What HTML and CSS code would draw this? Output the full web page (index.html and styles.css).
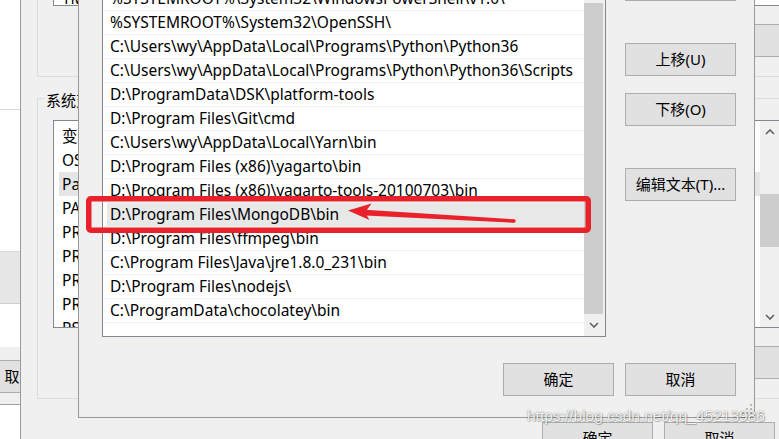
FILE: index.html
```html
<!DOCTYPE html>
<html lang="zh-CN">
<head>
<meta charset="utf-8">
<title>编辑环境变量</title>
<link rel="stylesheet" href="styles.css">
</head>
<body>
<div class="desktop">

  <div class="win bgwin">
    <div class="bg-a"></div>
    <div class="bg-b"></div>
    <div class="bg-c"></div>
    <div class="bg-d"></div>
    <div class="bg-e"><button class="btn bg-btn">取消</button></div>
    <div class="bg-f"></div>
  </div>

  <div class="win envwin">
    <div class="group group-user">
      <div class="listview lv-user">
        <div class="lv-rows">
          <div class="lv-row"><span class="lv-name" title="TMP">TMP</span></div>
        </div>
      </div>
      <div class="btn-row">
        <button class="btn" aria-label="新建(N)..."></button>
        <button class="btn" aria-label="编辑(E)..."></button>
        <button class="btn" aria-label="删除(D)"></button>
      </div>
    </div>

    <div class="group group-sys">
      <div class="group-title" title="系统变量(S)">系统变量</div>
      <div class="listview lv-sys">
        <div class="lv-rows">
          <div class="lv-row lv-head"><span class="lv-name" title="变量">变量</span></div>
          <div class="lv-row"><span class="lv-name" title="OS">OS</span></div>
          <div class="lv-row is-sel"><span class="lv-name" title="Path">Pa</span></div>
          <div class="lv-row"><span class="lv-name" title="PATHEXT">PA</span></div>
          <div class="lv-row"><span class="lv-name" title="PROCESSOR_ARCHITECTURE">PR</span></div>
          <div class="lv-row"><span class="lv-name" title="PROCESSOR_IDENTIFIER">PR</span></div>
          <div class="lv-row"><span class="lv-name" title="PROCESSOR_LEVEL">PR</span></div>
          <div class="lv-row"><span class="lv-name" title="PROCESSOR_REVISION">PR</span></div>
          <div class="lv-row"><span class="lv-name" title="PSModulePath">PS</span></div>
        </div>
        <div class="vscroll vscroll-sys">
          <div class="sb-arrow sb-up"><svg width="10" height="6" viewBox="0 0 10 6"><polyline points="1,5 5,1 9,5" fill="none" stroke="#606060" stroke-width="1.6"/></svg></div>
          <div class="sb-track"><div class="sb-thumb sys-thumb"></div></div>
          <div class="sb-arrow sb-down"><svg width="10" height="6" viewBox="0 0 10 6"><polyline points="1,1 5,5 9,1" fill="none" stroke="#606060" stroke-width="1.6"/></svg></div>
        </div>
      </div>
      <div class="btn-row">
        <button class="btn" aria-label="新建(W)..."></button>
        <button class="btn" aria-label="编辑(I)..."></button>
        <button class="btn" aria-label="删除(L)"></button>
      </div>
    </div>

    <div class="env-footer">
      <button class="btn">确定</button>
      <button class="btn">取消</button>
    </div>
  </div>

  <div class="win editdlg">
    <div class="edit-body">
      <div class="pathlist">
        <div class="path-rows">
          <div class="path-row">%SYSTEMROOT%\System32\Wbem</div>
          <div class="path-row">%SYSTEMROOT%\System32\WindowsPowerShell\v1.0\</div>
          <div class="path-row">%SYSTEMROOT%\System32\OpenSSH\</div>
          <div class="path-row">C:\Users\wy\AppData\Local\Programs\Python\Python36</div>
          <div class="path-row">C:\Users\wy\AppData\Local\Programs\Python\Python36\Scripts</div>
          <div class="path-row">D:\ProgramData\DSK\platform-tools</div>
          <div class="path-row">D:\Program Files\Git\cmd</div>
          <div class="path-row">C:\Users\wy\AppData\Local\Yarn\bin</div>
          <div class="path-row">D:\Program Files (x86)\yagarto\bin</div>
          <div class="path-row">D:\Program Files (x86)\yagarto-tools-20100703\bin</div>
          <div class="path-row is-sel">D:\Program Files\MongoDB\bin</div>
          <div class="path-row">D:\Program Files\ffmpeg\bin</div>
          <div class="path-row">C:\Program Files\Java\jre1.8.0_231\bin</div>
          <div class="path-row">D:\Program Files\nodejs\</div>
          <div class="path-row">C:\ProgramData\chocolatey\bin</div>
        </div>
        <div class="vscroll vscroll-path">
          <div class="sb-arrow sb-up-path"><svg width="10" height="6" viewBox="0 0 10 6"><polyline points="1,5 5,1 9,5" fill="none" stroke="#606060" stroke-width="1.6"/></svg></div>
          <div class="sb-track"><div class="sb-thumb path-thumb"></div></div>
          <div class="sb-arrow sb-down-path"><svg width="10" height="6" viewBox="0 0 10 6"><polyline points="1,1 5,5 9,1" fill="none" stroke="#606060" stroke-width="1.6"/></svg></div>
        </div>
      </div>
      <div class="side-btns">
        <button class="btn">删除(D)</button>
        <button class="btn gap-lg">上移(U)</button>
        <button class="btn gap-sm">下移(O)</button>
        <button class="btn gap-lg">编辑文本(T)...</button>
      </div>
    </div>
    <div class="edit-footer">
      <button class="btn">确定</button>
      <button class="btn">取消</button>
    </div>
    <svg class="grip" width="11" height="11" viewBox="0 0 11 11">
      <rect x="8" y="0" width="2" height="2" fill="#b9b9b9"/>
      <rect x="4" y="4" width="2" height="2" fill="#b9b9b9"/>
      <rect x="8" y="4" width="2" height="2" fill="#b9b9b9"/>
      <rect x="0" y="8" width="2" height="2" fill="#b9b9b9"/>
      <rect x="4" y="8" width="2" height="2" fill="#b9b9b9"/>
      <rect x="8" y="8" width="2" height="2" fill="#b9b9b9"/>
    </svg>
  </div>

  <svg class="annot" width="779" height="439" viewBox="0 0 779 439">
    <rect x="88.75" y="198.75" width="499.5" height="31.5" rx="2" fill="none" stroke="#e8212a" stroke-width="5.5"/>
    <polygon points="365,209.8 514,219.3 514,222.7 365,215.4" fill="#e8212a"/>
    <circle cx="514" cy="221" r="1.7" fill="#e8212a"/>
    <polygon points="348,210.5 371.5,203.5 365,212.6 369.5,220" fill="#e8212a"/>
  </svg>

  <div class="watermark">https://blog.csdn.net/qq_45213986</div>
</div>
</body>
</html>
```

FILE: styles.css
```css
* { box-sizing: border-box; }
html, body { margin: 0; padding: 0; }
body {
  width: 779px;
  height: 439px;
  overflow: hidden;
  background: #fff;
  font-family: "Noto Sans", "Noto Sans CJK SC", sans-serif;
  font-size: 15px;
  color: #000;
}
.desktop { position: relative; width: 779px; height: 439px; overflow: hidden; }
.win { position: absolute; }

.btn {
  display: flex;
  align-items: center;
  justify-content: center;
  flex: none;
  width: 111px;
  height: 33px;
  margin: 0;
  padding: 0;
  border: 1px solid #adadad;
  background: #e1e1e1;
  font: inherit;
  color: #000;
  line-height: 1;
  white-space: nowrap;
}

/* background window at far left */
.bgwin { left: 0; top: 0; width: 60px; height: 439px; display: flex; flex-direction: column; }
.bg-a { height: 110px; background: #fff; border-bottom: 1px solid #d9d9d9; }
.bg-b { height: 142px; background: #fff; border-bottom: 1px solid #d9d9d9; }
.bg-c { height: 52px; background: #e6e6e6; border-bottom: 1px solid #cfcfcf; }
.bg-d { height: 43px; background: #fff; }
.bg-e { height: 57px; background: #f0f0f0; padding-top: 13px; }
.bg-btn { margin-left: -36px; }
.bg-f { flex: 1; background: #fff; border-top: 1px solid #a0a0a0; }

/* environment variables window */
.envwin {
  left: 20px;
  top: -50px;
  width: 780px;
  height: 510px;
  background: #f0f0f0;
  border-left: 1px solid #999;
  display: flex;
  flex-direction: column;
}
.group {
  flex: none;
  margin-left: 16px;
  width: 754px;
  border: 1px solid #dcdcdc;
  display: flex;
  flex-direction: column;
  align-items: flex-start;
  padding-left: 15px;
}
.group-user { height: 127px; padding-top: 19px; }
.group-sys { height: 301px; margin-top: 21px; }
.group-title {
  margin: -11px 0 0 -9px;
  padding: 0 2px;
  line-height: 24px;
  background: #f0f0f0;
  width: 42px;
  overflow: hidden;
  white-space: nowrap;
}
.listview {
  flex: none;
  width: 728px;
  background: #fff;
  border: 1px solid #828790;
  display: flex;
  overflow: hidden;
}
.lv-user { height: 36px; padding-top: 15px; }
.lv-sys { height: 208px; margin-top: 8px; }
.lv-rows { flex: 1; padding-top: 3px; font-size: 15.5px; }
.lv-user .lv-rows { padding-top: 0; }
.lv-row {
  height: 24px;
  line-height: 24px;
  margin-left: 5px;
  padding-left: 3px;
  white-space: nowrap;
  display: flex;
}
.lv-name { width: 22px; overflow: hidden; }
.lv-row.is-sel { background: #e5e5e5; }
.btn-row {
  align-self: stretch;
  display: flex;
  justify-content: flex-end;
  gap: 12px;
  margin-top: 18px;
  padding-right: 4px;
}
.env-footer {
  display: flex;
  gap: 11px;
  margin-top: 23px;
  padding-left: 521px;
}

/* scrollbars */
.vscroll { flex: none; background: #f0f0f0; display: flex; flex-direction: column; }
.vscroll-sys { width: 20px; }
.vscroll-path { width: 21px; }
.sb-arrow { flex: none; display: flex; align-items: center; justify-content: center; }
.sb-up { height: 21px; }
.sb-down { height: 21px; }
.sb-up-path { height: 21px; }
.sb-down-path { height: 22px; padding-right: 2px; }
.sb-track { flex: 1; }
.sb-thumb { background: #cdcdcd; }
.sys-thumb { margin-top: 52px; height: 53px; }
.path-thumb { margin-top: 19px; height: 311px; width: 19px; }

/* edit environment variable dialog */
.editdlg {
  left: 78px;
  top: -50px;
  width: 677px;
  height: 468px;
  background: #f0f0f0;
  border: 1px solid #999;
  padding-top: 11px;
  display: flex;
  flex-direction: column;
}
.edit-body {
  display: grid;
  grid-template-columns: 504px 111px;
  column-gap: 19px;
  padding-left: 23px;
  align-items: start;
}
.pathlist {
  height: 375px;
  background: #fff;
  border: 1px solid #828790;
  display: flex;
  overflow: hidden;
}
.path-rows { flex: 1; min-width: 0; font-size: 15.5px; }
.path-row {
  height: 24px;
  line-height: 23px;
  margin-left: 1px;
  padding-left: 6px;
  border-bottom: 1px solid #efefef;
  white-space: nowrap;
  overflow: hidden;
}
.path-row.is-sel { background: #e8e8e8; box-shadow: inset 3px 0 0 #fff; }
.side-btns { display: flex; flex-direction: column; margin-top: 6px; }
.gap-lg { margin-top: 42px; }
.gap-sm { margin-top: 17px; }
.edit-footer {
  display: flex;
  justify-content: flex-end;
  gap: 11px;
  margin-top: 26px;
  padding-right: 18px;
}
.grip { position: absolute; right: 1px; bottom: 2px; }

/* annotation + watermark overlays */
.annot { position: absolute; left: 0; top: 0; pointer-events: none; }
.watermark {
  position: absolute;
  left: 527px;
  top: 407px;
  font-family: "Liberation Sans", Arial, sans-serif;
  font-size: 15.5px;
  line-height: 18px;
  color: rgba(255, 255, 255, 0.92);
  text-shadow: 0 0 1.5px rgba(0, 0, 0, 0.55), 1px 1px 1px rgba(0, 0, 0, 0.2);
  white-space: nowrap;
}
```
